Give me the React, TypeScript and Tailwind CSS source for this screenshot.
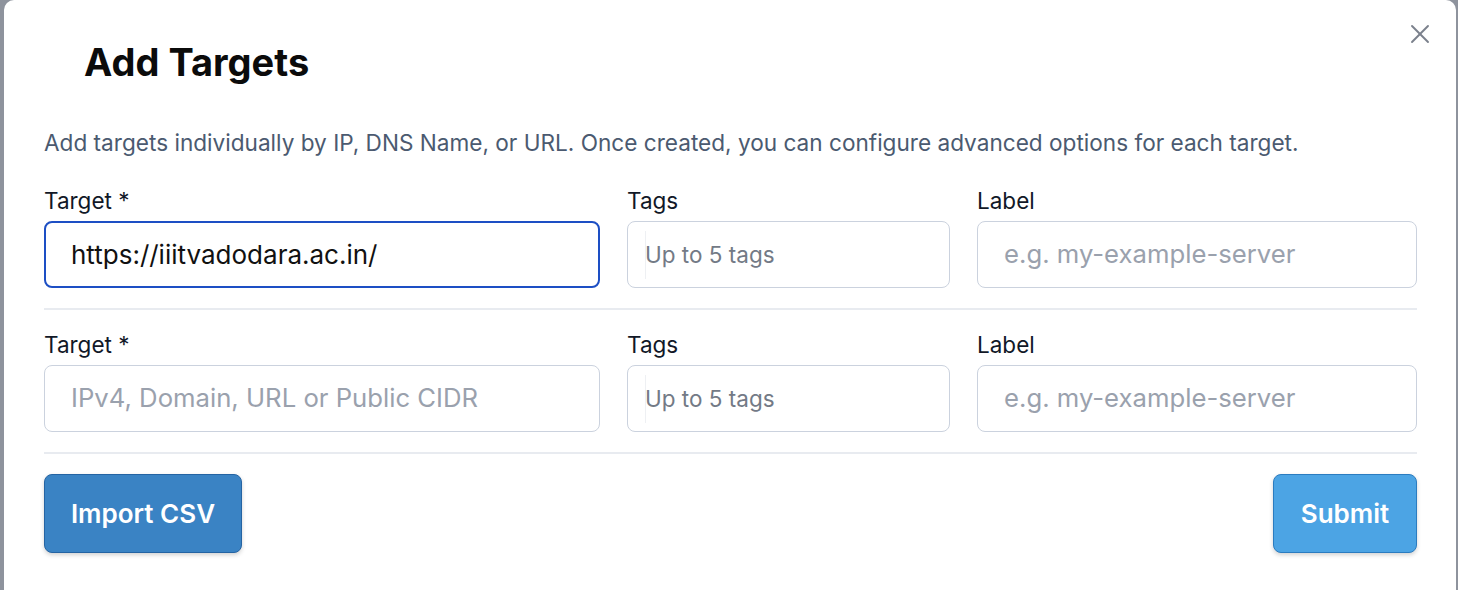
import { X } from 'lucide-react';

const font = { fontFamily: 'Inter, "Noto Sans", sans-serif' };

function Field({
  label,
  placeholder,
  value,
  variant = 'default',
}: {
  label: string;
  placeholder?: string;
  value?: string;
  variant?: 'default' | 'focused' | 'tags';
}) {
  const box =
    variant === 'focused'
      ? 'border-2 border-[#1d4fc4] pl-[25px]'
      : variant === 'tags'
        ? 'border border-[#cbd2de] pl-[17px]'
        : 'border border-[#cbd2de] pl-[26px]';
  return (
    <div className="flex flex-col">
      <label className="mb-[7px] text-[22.5px] leading-[26px] text-[#111827]">{label}</label>
      <div className={`flex h-[67px] items-center rounded-lg bg-white ${box}`}>
        {variant === 'tags' && <span className="mr-[-1px] h-[48px] w-px bg-[#eef0f3]" />}
        {value ? (
          <span className="text-[26px] text-[#111111]">{value}</span>
        ) : (
          <span
            className={
              variant === 'tags' ? 'text-[22.5px] text-[#737a86]' : 'text-[25.7px] text-[#9aa1ad]'
            }
          >
            {placeholder}
          </span>
        )}
      </div>
    </div>
  );
}

function TargetRow({ focused }: { focused?: boolean }) {
  return (
    <div className="grid grid-cols-[556px_323px_440px] gap-x-[27px]">
      {focused ? (
        <Field label="Target *" value="https://iiitvadodara.ac.in/" variant="focused" />
      ) : (
        <Field label="Target *" placeholder="IPv4, Domain, URL or Public CIDR" />
      )}
      <Field label="Tags" placeholder="Up to 5 tags" variant="tags" />
      <Field label="Label" placeholder="e.g. my-example-server" />
    </div>
  );
}

export default function App() {
  return (
    <div className="flex h-[590px] w-[1458px] bg-[#8e939d]" style={font}>
      <div className="relative ml-[4px] mr-[2px] flex-1 rounded-tl-[10px] rounded-tr-[10px] bg-white pl-[40px] pr-[39px]">
        <button className="absolute right-[20px] top-[18px] text-[#7b818c]">
          <X size={32} strokeWidth={1.4} />
        </button>
        <h2 className="pl-[40px] pt-[38px] text-[38px] font-bold leading-[48px] text-[#0b0b0b]">
          Add Targets
        </h2>
        <p className="mt-[42px] text-[22.6px] leading-[30px] text-[#4b5a70]">
          Add targets individually by IP, DNS Name, or URL. Once created, you can configure advanced
          options for each target.
        </p>
        <div className="mt-[30px]">
          <TargetRow focused />
        </div>
        <div className="mb-[22px] mt-[20px] h-[2px] bg-[#e8ebf0]" />
        <TargetRow />
        <div className="mt-[20px] h-[2px] bg-[#e8ebf0]" />
        <div className="mt-[20px] flex justify-between">
          <button className="h-[79px] w-[198px] rounded-lg border border-[#2564a3] bg-[#3a83c4] text-[26px] font-semibold text-white shadow-[0_2px_4px_rgba(0,0,0,0.18)]">
            Import CSV
          </button>
          <button className="h-[79px] w-[144px] rounded-lg border border-[#2b7cc0] bg-[#4ca4e4] text-[26px] font-semibold text-white shadow-[0_2px_4px_rgba(0,0,0,0.18)]">
            Submit
          </button>
        </div>
      </div>
    </div>
  );
}
